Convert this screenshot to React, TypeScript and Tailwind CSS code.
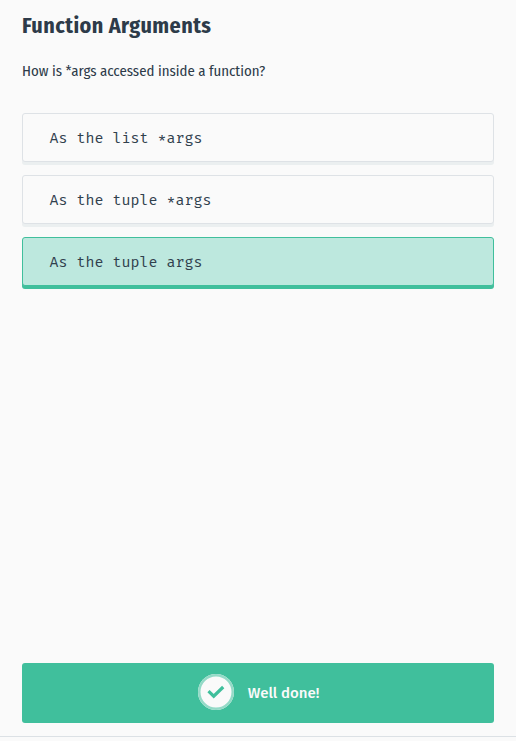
const answers = [
  { text: 'As the list *args', correct: false },
  { text: 'As the tuple *args', correct: false },
  { text: 'As the tuple args', correct: true },
];

function Answer({ text, correct }: { text: string; correct: boolean }) {
  const tone = correct
    ? 'border-[#40bf9c] bg-[#bde8de] shadow-[0_3px_0_#40bf9c]'
    : 'border-[#dee2e6] bg-[#fafafa] shadow-[0_3px_0_#ebeff0]';
  return (
    <button
      className={`flex h-[49px] w-full items-center rounded-[3px] border pt-px pl-[26.5px] text-left font-['Fira_Mono','DejaVu_Sans_Mono',monospace] text-[15px] whitespace-pre text-[#30404d] ${tone}`}
    >
      {text}
    </button>
  );
}

export default function App() {
  return (
    <div className="flex h-[741px] w-full flex-col bg-[#fafafa] font-['Fira_Sans','Noto_Sans',sans-serif] text-[#2d3b49]">
      <main className="flex h-[737px] flex-col border-b border-[#dce1e5] px-[22px] pt-[10px] pb-[13px]">
        <h1 className="h-[32px] font-['Fira_Sans_Condensed','Fira_Sans','Noto_Sans',sans-serif] text-[22px] leading-[32px] font-bold tracking-[0.44px] whitespace-nowrap">
          Function Arguments
        </h1>
        <p className="mt-[19px] h-5 font-['Fira_Sans_Condensed','Fira_Sans','Noto_Sans',sans-serif] text-[14.8px] leading-5 whitespace-nowrap">
          How is *args accessed inside a function?
        </p>
        <div className="mt-8 flex flex-col gap-[13px]">
          {answers.map((a) => (
            <Answer key={a.text} {...a} />
          ))}
        </div>
        <div className="mt-auto flex h-[60px] items-center rounded-[3px] bg-[#40bf9c] pl-[175.5px] text-[#fafafa]">
          <span className="-mt-[3px] flex size-[36px] items-center justify-center rounded-full bg-[#fafafa] shadow-[inset_0_0_0_2.5px_#94dac7]">
            <svg viewBox="0 0 18 14" className="h-[14px] w-[18px]" fill="none" stroke="#40bf9c" strokeWidth="3.2">
              <path d="M1.5 6.2 6.7 11.2 16.2 2" />
            </svg>
          </span>
          <span className="ml-[14.3px] text-[15px] leading-5 font-medium whitespace-nowrap">Well done!</span>
        </div>
      </main>
    </div>
  );
}
